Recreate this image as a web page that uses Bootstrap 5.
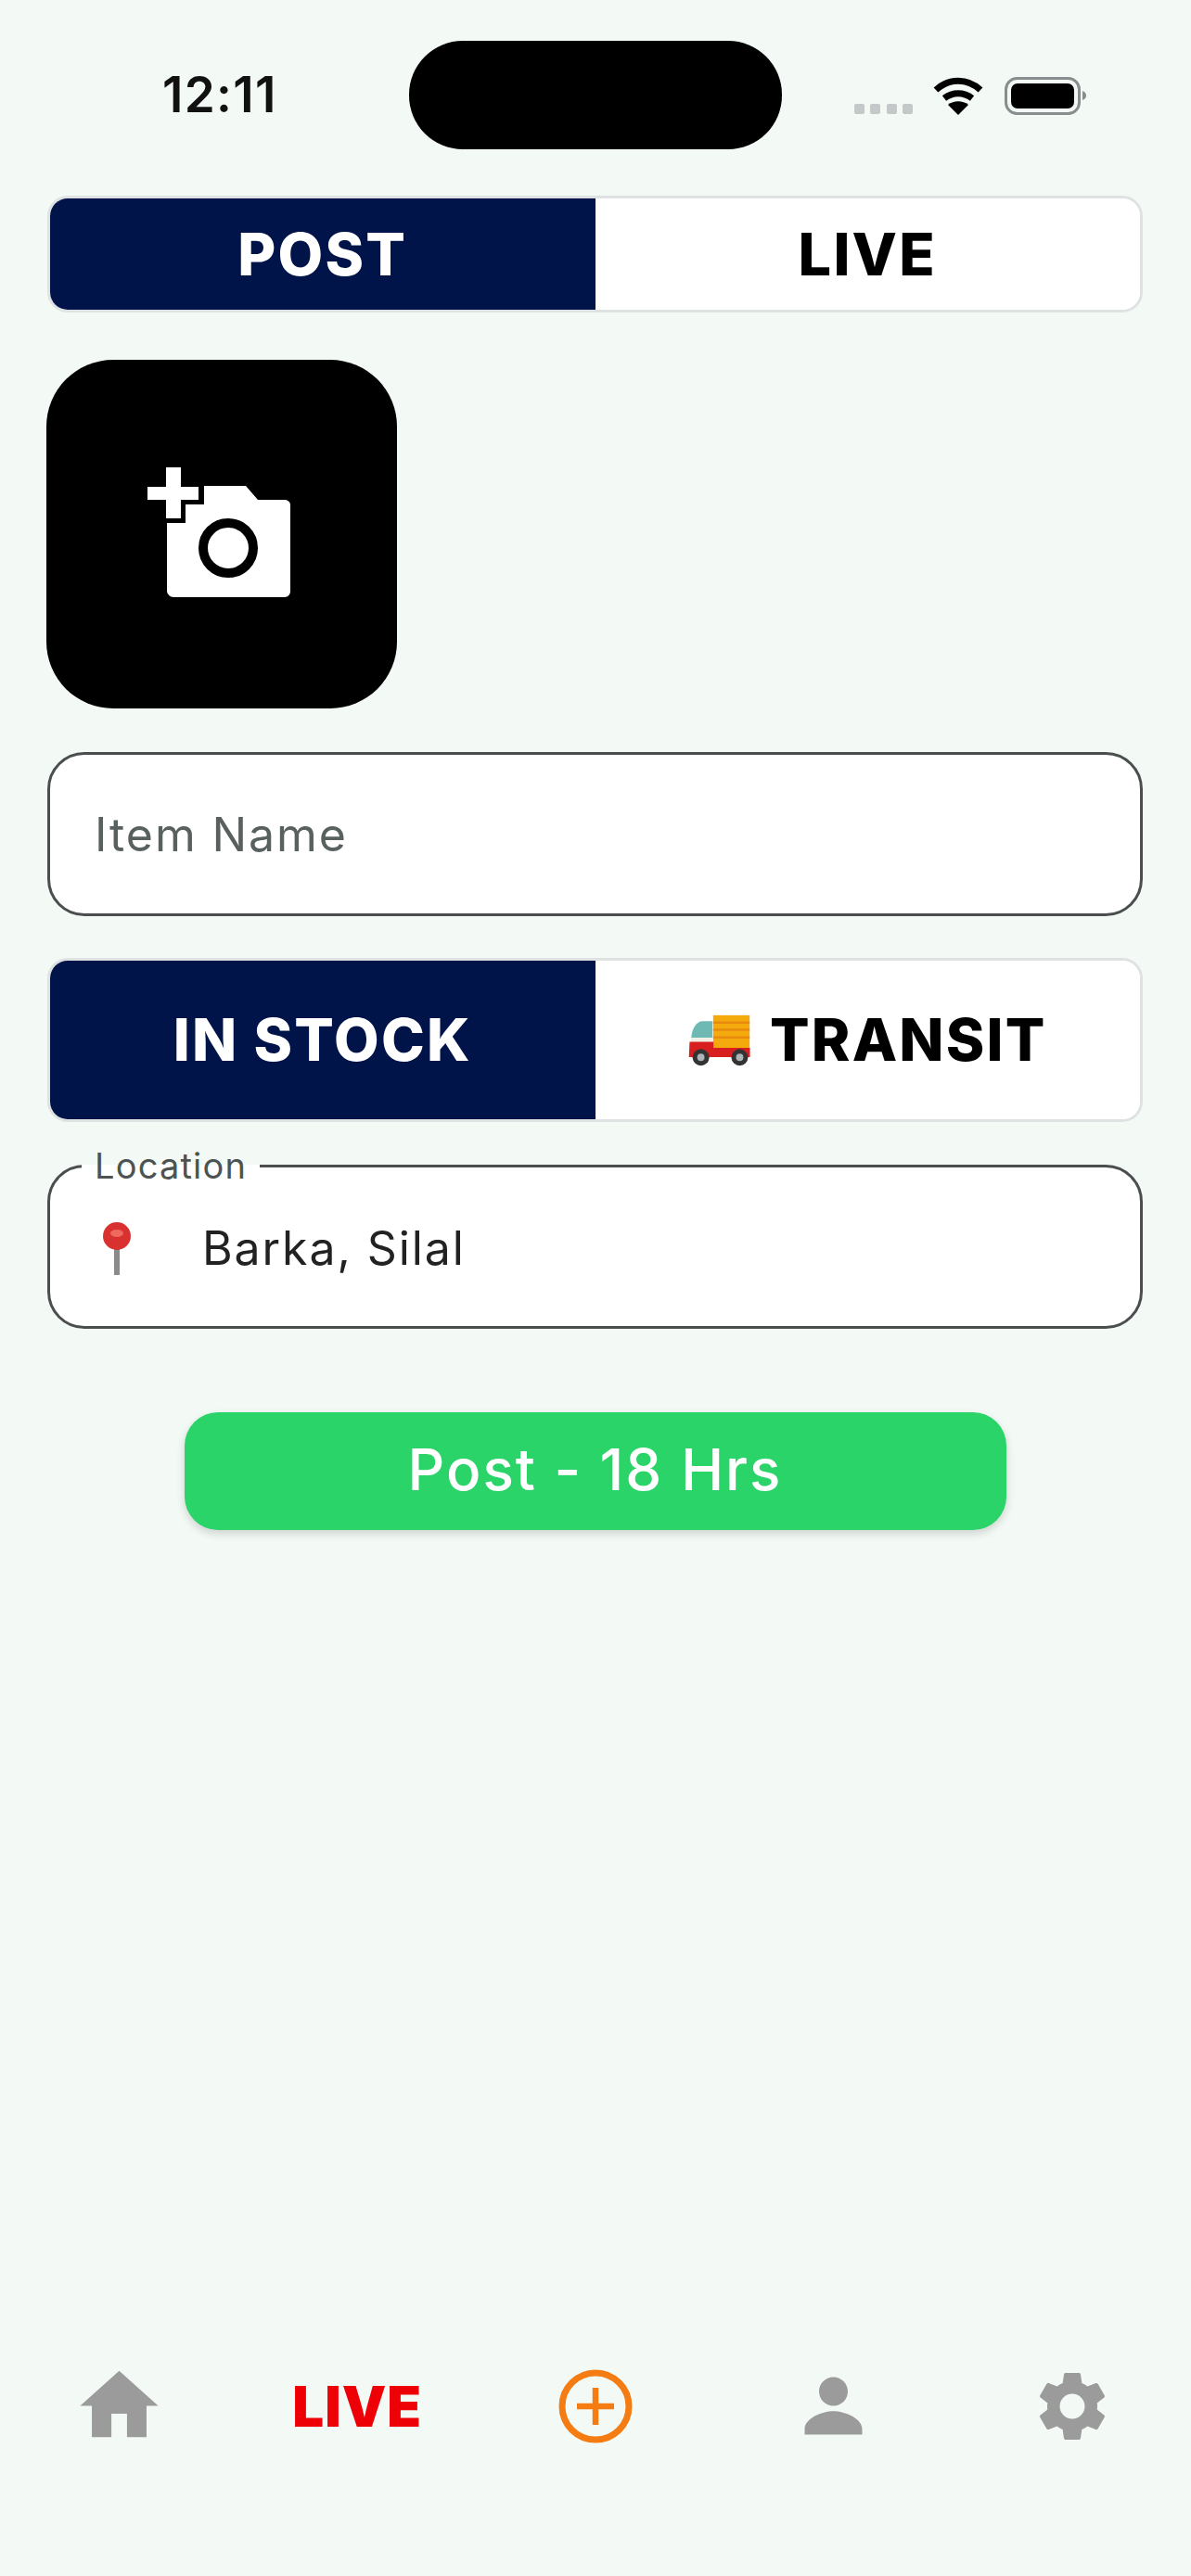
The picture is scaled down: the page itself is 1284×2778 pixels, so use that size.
<!DOCTYPE html>
<html lang="en">
<head>
<meta charset="utf-8">
<title>Post</title>
<link href="https://cdn.jsdelivr.net/npm/bootstrap@5.3.0/dist/css/bootstrap.min.css" rel="stylesheet">
<style>
html,body{margin:0;background:#f3faf6;}
body{font-family:"Inter","Liberation Sans",sans-serif;}
.screen{height:2778px;background:#f3faf6;overflow:hidden;}
.status-row{display:grid;grid-template-columns:1fr 402px 1fr;height:117px;margin-top:44px;align-items:center;}
.clock{font-size:53px;font-weight:600;color:#111;padding-left:175px;letter-spacing:1.3px;line-height:1;}
.island{height:117px;background:#000;border-radius:58px;}
.status-icons{display:flex;align-items:flex-start;padding-left:78px;height:117px;padding-top:39px;}
.dots{margin-top:29px;margin-right:21px;}
.wifi{margin-right:23px;}
.form-area{padding:0 52px 0 51px;}
.seg{display:flex;background:#fff;border:3px solid #dfe2e2;border-radius:22px;overflow:hidden;}
.seg-a{height:126px;margin-top:50px;}
.seg-b{height:177px;margin-top:45px;}
.seg .btn{flex:1 1 50%;border:0;border-radius:0;font-weight:800;font-size:63px;letter-spacing:2.2px;line-height:1;display:flex;align-items:center;justify-content:center;gap:20px;padding:0;}
.seg .on,.seg .on:hover{background:#00144a;color:#fff;}
.seg .off,.seg .off:hover{background:#fff;color:#000;}
.shot{display:block;width:378px;height:376px;margin:51px 0 0 -1px;padding:0;border:0;border-radius:72px;background:#000;}
.shot svg{display:block;}
.name-input{height:177px;margin-top:47px;border:3px solid #4a4e4e;border-radius:40px;padding:0 48px;font-size:50px;letter-spacing:1.9px;color:#222;background:#fff;}
.name-input::placeholder{color:#596060;opacity:1;}
.loc{height:194px;margin:29px 0 0;border:3px solid #4a4e4e;border-radius:40px;background:#fff;padding:0 48px 0 56px;min-width:0;display:block;}
.loc legend{float:none;width:auto;margin:0 0 0 -22px;padding:0 14px;font-size:38px;line-height:36px;letter-spacing:1.2px;color:#4d5353;}
.loc-row{display:flex;align-items:center;height:150px;margin-top:-4px;}
.loc-row svg{flex:none;margin-right:76px;}
.loc-input{border:0;padding:0;font-size:50px;letter-spacing:1.9px;color:#222;background:transparent;box-shadow:none;}
.loc-input:focus{box-shadow:none;background:transparent;}
.post-btn{display:block;width:886px;height:127px;margin:90px auto 0;border:0;border-radius:36px;background:#2ad468;color:#fff;font-size:62px;font-weight:500;letter-spacing:2px;line-height:1;padding:0 0 3px;box-shadow:0 4px 10px rgba(0,0,0,.16);}
.post-btn:hover,.post-btn:active{background:#2ad468;color:#fff;}
.tabs{display:grid;grid-template-columns:repeat(5,1fr);margin-top:894px;height:84px;align-items:center;justify-items:center;}
.tabs a{display:block;text-decoration:none;line-height:0;}
.live-tab{font-size:60px;font-weight:900;color:#ee0007;letter-spacing:1px;line-height:1 !important;}
</style>
</head>
<body>
<div class="screen d-flex flex-column">
  <div class="status-row">
    <div class="clock">12:11</div>
    <div class="island"></div>
    <div class="status-icons">
      <svg width="64" height="12" viewBox="0 0 64 12" class="dots"><g fill="#c4c8c8"><rect x="0" width="11" height="11" rx="2"/><rect x="17" width="11" height="11" rx="2"/><rect x="35" width="11" height="11" rx="2"/><rect x="52" width="11" height="11" rx="2"/></g></svg>
      <svg width="54" height="41" viewBox="0 0 54 41" class="wifi"><g fill="none" stroke="#000" stroke-width="7"><path d="M3 14C17 1 37 1 51 14"/><path d="M12 23c9-7 21-7 30 0"/></g><path d="M27 41 16 30c6-5 16-5 22 0z"/></svg>
      <svg width="88" height="41" viewBox="0 0 88 41"><rect x="1.5" y="1.5" width="79" height="38" rx="12" fill="none" stroke="#8a8d8d" stroke-width="3"/><rect x="7" y="7" width="68" height="27" rx="7" fill="#000"/><path d="M84 15c3 1 4 3 4 5s-1 4-4 5z" fill="#8a8d8d"/></svg>
    </div>
  </div>

  <div class="form-area">
    <div class="seg seg-a">
      <button type="button" class="btn on">POST</button>
      <button type="button" class="btn off">LIVE</button>
    </div>

    <button type="button" class="shot" aria-label="Add photo">
      <svg width="378" height="376" viewBox="0 0 378 376">
        <path d="M130 176h20v-20h20v-20h45l13 15h29a6 6 0 0 1 6 7v92a6 6 0 0 1-6 6H137a7 7 0 0 1-7-6z" fill="#fff"/>
        <circle cx="196" cy="203" r="27" fill="#fff" stroke="#000" stroke-width="10"/>
        <path d="M129 116h16v21h19v14h-19v20h-16v-20h-20v-14h20z" fill="#fff"/>
      </svg>
    </button>

    <input type="text" class="form-control name-input" placeholder="Item Name">

    <div class="seg seg-b">
      <button type="button" class="btn on">IN STOCK</button>
      <button type="button" class="btn off">
        <svg width="68" height="59" viewBox="140 120 190 165" aria-hidden="true">
          <rect x="215" y="128" width="110" height="100" fill="#f4a90c"/>
          <path d="M215 150h110M215 172h110M215 195h110" stroke="#e88a10" stroke-width="7"/>
          <path d="M213 146h-30c-18 0-32 22-34 50h64z" fill="#6fb9b5"/>
          <path d="M148 196h66v12h-66z" fill="#f4efe6"/>
          <path d="M144 208h72v18h110v28H142z" fill="#d81f1f"/>
          <circle cx="178" cy="255" r="25" fill="#333"/><circle cx="178" cy="255" r="11" fill="#aeb3b8"/>
          <circle cx="295" cy="255" r="25" fill="#333"/><circle cx="295" cy="255" r="11" fill="#aeb3b8"/>
        </svg>
        <span>TRANSIT</span>
      </button>
    </div>

    <fieldset class="loc">
      <legend>Location</legend>
      <div class="loc-row">
        <svg width="32" height="58" viewBox="0 0 32 58" aria-hidden="true">
          <rect x="13" y="26" width="6" height="32" fill="#8b8b8b"/>
          <circle cx="16" cy="16" r="15" fill="#d9312f"/>
          <ellipse cx="16" cy="13" rx="7" ry="4" fill="#ef6a5e"/>
        </svg>
        <input type="text" class="form-control loc-input" value="Barka, Silal">
      </div>
    </fieldset>

    <button type="button" class="btn post-btn">Post - 18 Hrs</button>
  </div>

  <nav class="tabs">
    <a href="#" aria-label="Home"><svg width="101" height="101" viewBox="0 0 24 24" fill="#9b9b9b"><path d="M10 20v-6h4v6h5v-8h3L12 3 2 12h3v8z"/></svg></a>
    <a href="#" class="live-tab">LIVE</a>
    <a href="#" aria-label="Add"><svg width="84" height="84" viewBox="0 0 84 84" fill="none" stroke="#f57c13"><circle cx="42" cy="42" r="36" stroke-width="7"/><path d="M42 22v40M22 42h40" stroke-width="6.5"/></svg></a>
    <a href="#" aria-label="Profile"><svg width="93" height="93" viewBox="0 0 24 24" fill="#9b9b9b"><path d="M12 12c2.21 0 4-1.79 4-4s-1.79-4-4-4-4 1.79-4 4 1.79 4 4 4zM4 20v-1.500c0-3 4.800-5 8-5s8 2 8 5V20z"/></svg></a>
    <a href="#" aria-label="Settings"><svg width="90" height="90" viewBox="0 0 24 24" fill="#9b9b9b"><path d="M19.14 12.94c.04-.3.06-.61.06-.94 0-.32-.02-.64-.07-.94l2.03-1.58c.18-.14.23-.41.12-.61l-1.92-3.32c-.12-.22-.37-.29-.59-.22l-2.39.96c-.5-.38-1.03-.7-1.62-.94l-.36-2.54c-.04-.24-.24-.41-.48-.41h-3.84c-.24 0-.43.17-.47.41l-.36 2.54c-.59.24-1.13.57-1.62.94l-2.39-.96c-.22-.08-.47 0-.59.22L2.74 8.87c-.12.21-.08.47.12.61l2.03 1.58c-.05.3-.09.63-.09.94s.02.64.07.94l-2.03 1.58c-.18.14-.23.41-.12.61l1.92 3.32c.12.22.37.29.59.22l2.39-.96c.5.38 1.03.7 1.62.94l.36 2.54c.05.24.24.41.48.41h3.84c.24 0 .44-.17.47-.41l.36-2.54c.59-.24 1.13-.56 1.62-.94l2.39.96c.22.08.47 0 .59-.22l1.92-3.32c.12-.22.07-.47-.12-.61l-2.01-1.58zM12 15.6c-1.98 0-3.6-1.62-3.6-3.6s1.62-3.6 3.6-3.6 3.6 1.62 3.6 3.6-1.62 3.6-3.6 3.6z"/></svg></a>
  </nav>
</div>
<script src="https://cdn.jsdelivr.net/npm/bootstrap@5.3.0/dist/js/bootstrap.bundle.min.js"></script>
</body>
</html>
